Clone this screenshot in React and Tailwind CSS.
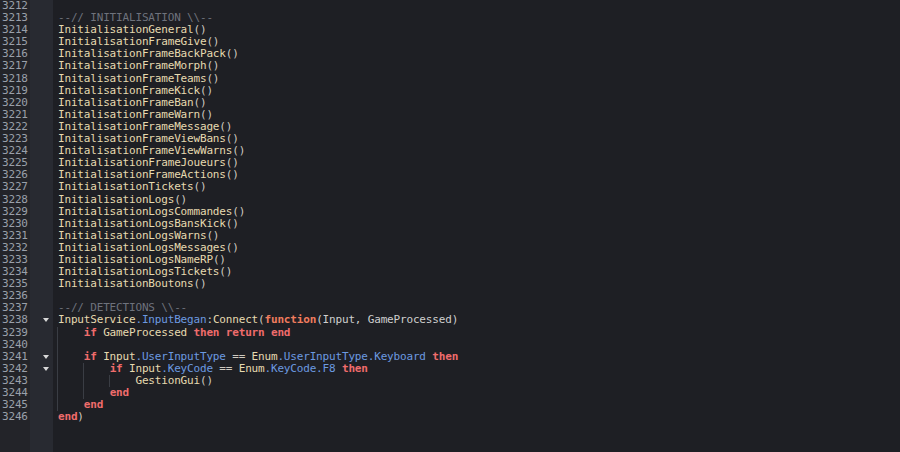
import React from 'react';

// token colours
const C = {
  id: 'text-[#e6dab0]',
  punc: 'text-[#cfcac0]',
  arg: 'text-[#cfcfcf]',
  prop: 'text-[#6c9ae0]',
  kw: 'text-[#f06c6c] font-bold',
  fn: 'text-[#f07c5e] font-bold',
  cm: 'text-[#6e727c]',
};

const T = (cls, text) => ({ cls, text });

const call = (name) => [T(C.id, name), T(C.punc, '()')];

const lines = [
  { n: 3212, t: [] },
  { n: 3213, t: [T(C.cm, '--// INITIALISATION \\\\--')] },
  { n: 3214, t: call('InitialisationGeneral') },
  { n: 3215, t: call('InitialisationFrameGive') },
  { n: 3216, t: call('InitalisationFrameBackPack') },
  { n: 3217, t: call('InitalisationFrameMorph') },
  { n: 3218, t: call('InitalisationFrameTeams') },
  { n: 3219, t: call('InitalisationFrameKick') },
  { n: 3220, t: call('InitalisationFrameBan') },
  { n: 3221, t: call('InitalisationFrameWarn') },
  { n: 3222, t: call('InitalisationFrameMessage') },
  { n: 3223, t: call('InitalisationFrameViewBans') },
  { n: 3224, t: call('InitalisationFrameViewWarns') },
  { n: 3225, t: call('InitialisationFrameJoueurs') },
  { n: 3226, t: call('InitialisationFrameActions') },
  { n: 3227, t: call('InitialisationTickets') },
  { n: 3228, t: call('InitialisationLogs') },
  { n: 3229, t: call('InitialisationLogsCommandes') },
  { n: 3230, t: call('InitialisationLogsBansKick') },
  { n: 3231, t: call('InitialisationLogsWarns') },
  { n: 3232, t: call('InitialisationLogsMessages') },
  { n: 3233, t: call('InitialisationLogsNameRP') },
  { n: 3234, t: call('InitialisationLogsTickets') },
  { n: 3235, t: call('InitialisationBoutons') },
  { n: 3236, t: [] },
  { n: 3237, t: [T(C.cm, '--// DETECTIONS \\\\--')] },
  {
    n: 3238,
    fold: true,
    t: [
      T(C.id, 'InputService'),
      T(C.prop, '.InputBegan'),
      T(C.punc, ':'),
      T(C.id, 'Connect'),
      T(C.punc, '('),
      T(C.fn, 'function'),
      T(C.arg, '(Input, GameProcessed)'),
    ],
  },
  {
    n: 3239,
    guides: [0],
    t: [
      T('', '    '),
      T(C.kw, 'if'),
      T(C.id, ' GameProcessed '),
      T(C.kw, 'then'),
      T('', ' '),
      T(C.kw, 'return'),
      T('', ' '),
      T(C.kw, 'end'),
    ],
  },
  { n: 3240, guides: [0], t: [] },
  {
    n: 3241,
    fold: true,
    guides: [0],
    t: [
      T('', '    '),
      T(C.kw, 'if'),
      T(C.id, ' Input'),
      T(C.prop, '.UserInputType'),
      T(C.punc, ' == '),
      T(C.id, 'Enum'),
      T(C.prop, '.UserInputType.Keyboard'),
      T('', ' '),
      T(C.kw, 'then'),
    ],
  },
  {
    n: 3242,
    fold: true,
    guides: [0, 4],
    t: [
      T('', '        '),
      T(C.kw, 'if'),
      T(C.id, ' Input'),
      T(C.prop, '.KeyCode'),
      T(C.punc, ' == '),
      T(C.id, 'Enum'),
      T(C.prop, '.KeyCode.F8'),
      T('', ' '),
      T(C.kw, 'then'),
    ],
  },
  { n: 3243, guides: [0, 4, 8], t: [T('', '            '), ...call('GestionGui')] },
  { n: 3244, guides: [0, 4], t: [T('', '        '), T(C.kw, 'end')] },
  { n: 3245, guides: [0], t: [T('', '    '), T(C.kw, 'end')] },
  { n: 3246, t: [T(C.kw, 'end'), T(C.punc, ')')] },
];

const guideLeft = {
  0: 'left-[-1px]',
  4: 'left-[25px]',
  8: 'left-[51px]',
};

function Line({ line }) {
  return (
    <div className="flex h-[12.1px] leading-[12.1px]">
      <div className="w-[53px] shrink-0 flex">
        <span className="w-[30px] pl-[2px] text-[#9aa0aa] bg-[#232429]">{line.n}</span>
        <span className="flex-1 flex items-center pl-[13px] bg-[#282a31]">
          {line.fold && (
            <span className="w-0 h-0 border-l-[3.5px] border-r-[3.5px] border-t-[4px] border-l-transparent border-r-transparent border-t-[#d8d8d8]" />
          )}
        </span>
      </div>
      <div className="relative pl-[5px] whitespace-pre">
        <div className="relative">
          {(line.guides || []).map((g) => (
            <span key={g} className={`absolute top-0 h-[12.1px] w-px bg-[#3a3d44] ${guideLeft[g]}`} />
          ))}
          {line.t.map((tok, i) => (
            <span key={i} className={tok.cls}>
              {tok.text}
            </span>
          ))}
        </div>
      </div>
    </div>
  );
}

export default function App() {
  return (
    <div className="w-[900px] h-[452px] overflow-hidden bg-[#1e1f24] flex">
      <div
        className="flex-1 text-[11px] tracking-[-0.17px]"
        style={{ fontFamily: '"DejaVu Sans Mono", "Liberation Mono", monospace' }}
      >
        {lines.map((line) => (
          <Line key={line.n} line={line} />
        ))}
        <div className="w-[53px] h-[60px] flex">
          <div className="w-[30px] bg-[#232429]" />
          <div className="flex-1 bg-[#282a31]" />
        </div>
      </div>
    </div>
  );
}
